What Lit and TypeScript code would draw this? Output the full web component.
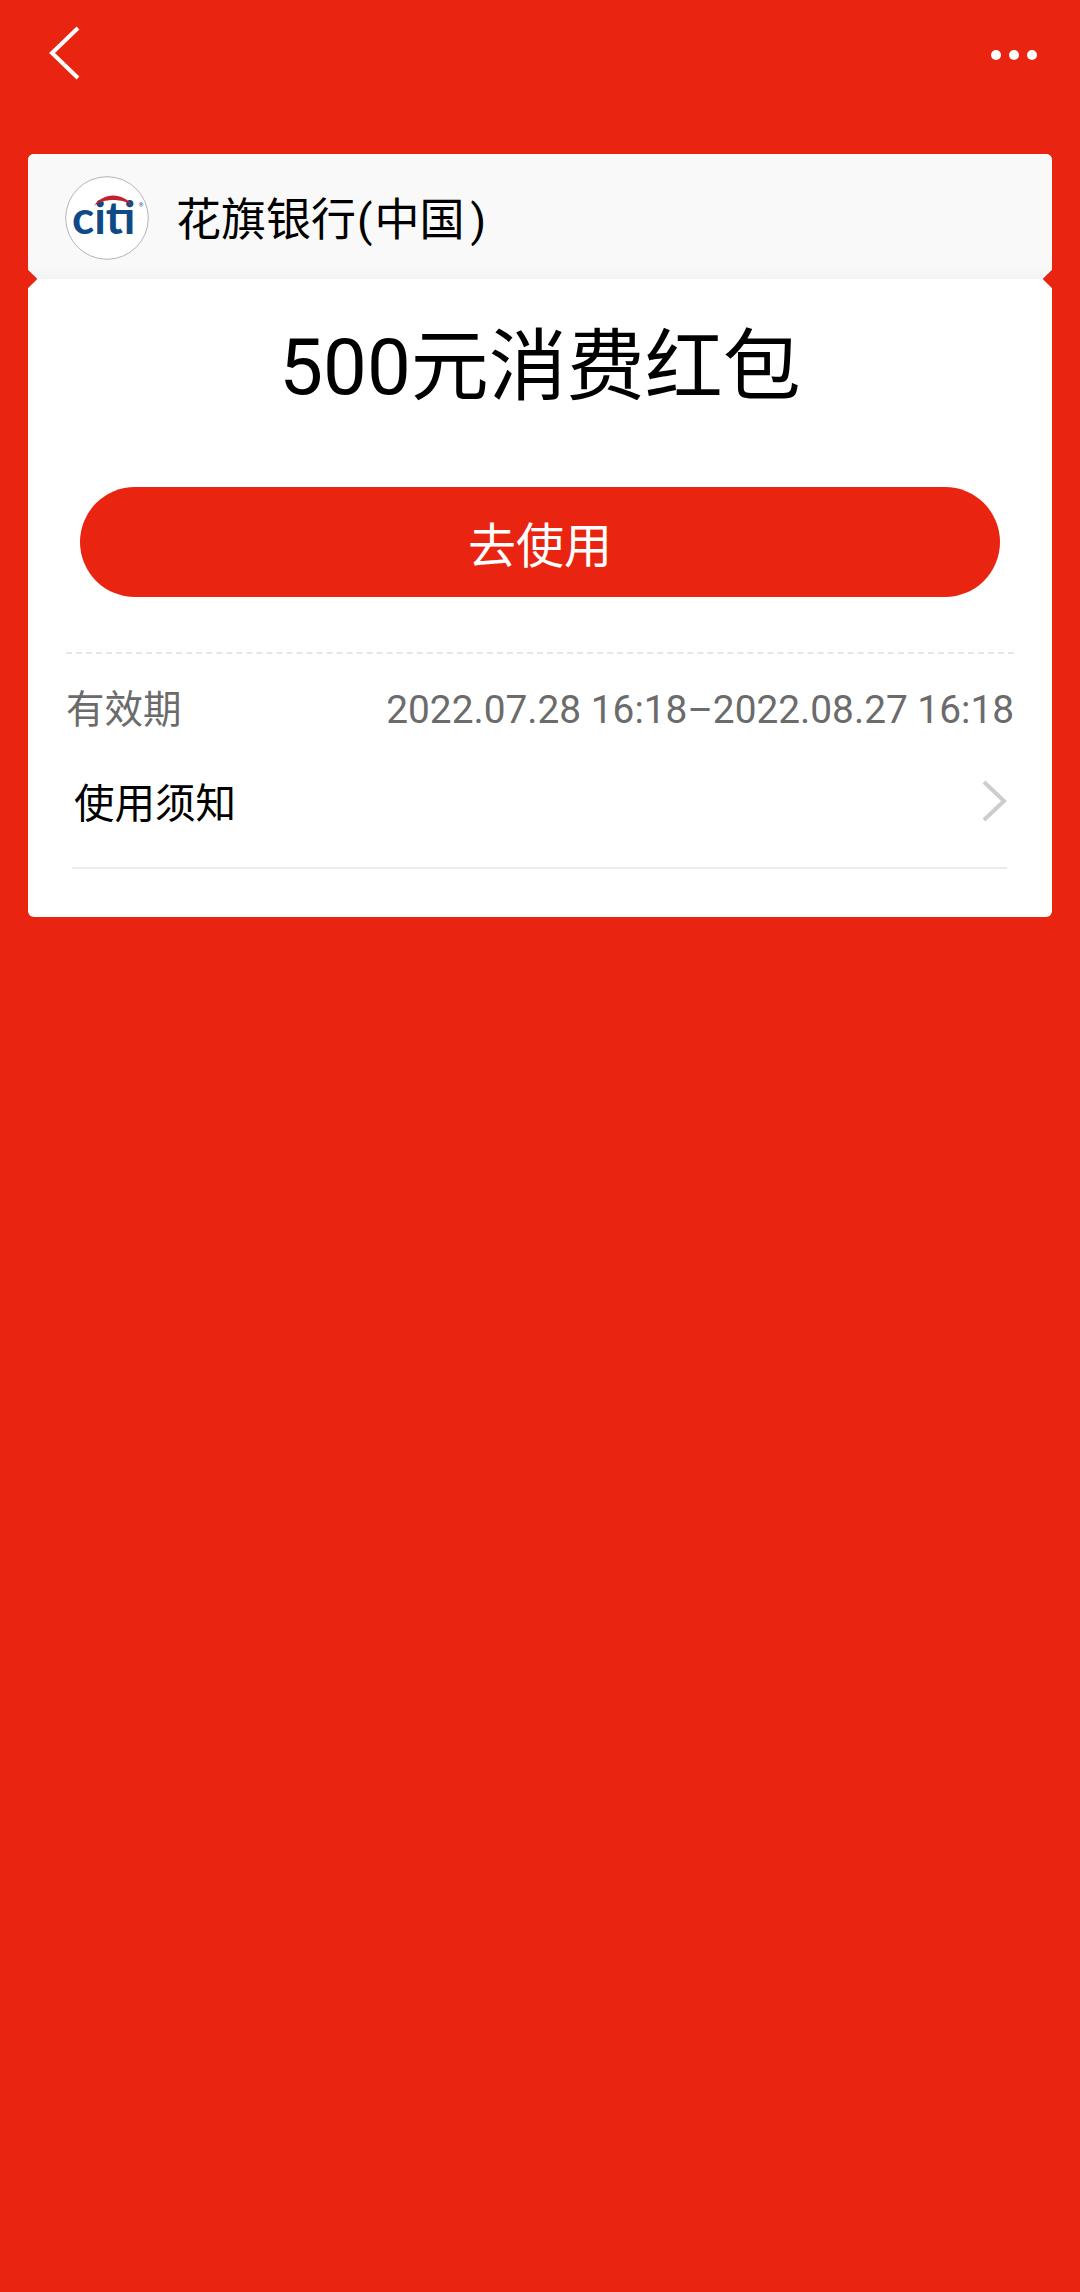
import { LitElement, html, css } from "lit";
import { customElement } from "lit/decorators.js";

@customElement("app-root")
export class AppRoot extends LitElement {
  static styles = css`
    :host {
      display: block;
      width: 1080px;
      height: 2292px;
      background: #e92511;
      font-family: Roboto, "Noto Sans CJK SC", sans-serif;
      overflow: hidden;
    }
    .nav {
      height: 154px;
      box-sizing: border-box;
      padding: 26px 43px 0 48px;
      display: flex;
      justify-content: space-between;
      align-items: flex-start;
    }
    .back { display: block; }
    .dots { display: flex; gap: 8px; margin-top: 24px; }
    .dots i { width: 10px; height: 10px; border-radius: 50%; background: #fff; display: block; }
    .card {
      position: relative;
      margin: 0 28px;
      height: 763px;
      background: #fff;
      border-radius: 6px;
      overflow: hidden;
    }
    .head {
      height: 125px;
      background: linear-gradient(#f9f9f9 0, #f9f9f9 112px, #f3f3f3 125px);
      display: flex;
      align-items: center;
      padding-left: 37px;
      gap: 27px;
      font-size: 45px;
      color: #000;
    }
    .logo { display: block; flex: none; margin-top: 2px; }
    .paren { display: inline-block; }
    .paren.open { margin: 0 2px 0 1px; }
    .paren.close { margin: 0 0 0 6px; }
    .notch {
      position: absolute;
      top: 117px;
      width: 16px;
      height: 16px;
      background: #e92511;
      transform: rotate(45deg);
    }
    .notch.l { left: -10px; }
    .notch.r { right: -10px; }
    .title {
      text-align: center;
      font-size: 78px;
      line-height: 88px;
      color: #000;
      margin-top: 45px;
    }
    .btn {
      margin: 75px 52px 0 52px;
      height: 110px;
      border-radius: 55px;
      background: #e92511;
      color: #fff;
      font-size: 48px;
      display: flex;
      align-items: center;
      justify-content: center;
    }
    .dash {
      margin: 55px 38px 0 38px;
      border-top: 2px dashed #e6e6e6;
    }
    .valid {
      margin: 29px 38px 0 38px;
      display: flex;
      justify-content: space-between;
      align-items: baseline;
      color: #6b6b6b;
      height: 54px;
      line-height: 54px;
    }
    .valid .k { font-size: 38.5px; }
    .valid .v { font-size: 38.8px; }
    .notice {
      margin: 0 45px 0 44px;
      height: 132px;
      box-sizing: border-box;
      border-bottom: 2px solid #ebebeb;
      display: flex;
      justify-content: space-between;
      align-items: center;
      padding: 0 0 3px 2px;
      color: #000;
      font-size: 40.5px;
    }
    .chev { display: block; }
  `;

  render() {
    return html`
      <div class="nav">
        <svg class="back" width="32" height="54" viewBox="0 0 32 54" aria-hidden="true">
          <path d="M30 2 L4 27 L30 52" fill="none" stroke="#fff" stroke-width="4" />
        </svg>
        <div class="dots"><i></i><i></i><i></i></div>
      </div>
      <div class="card">
        <div class="head">
          <svg class="logo" width="84" height="84" viewBox="0 0 84 84" aria-hidden="true">
            <circle cx="42" cy="42" r="41.3" fill="#fff" stroke="#b5b5b5" stroke-width="1" />
            <text x="7" y="58" font-family="Lato, sans-serif" font-weight="700" font-size="46" fill="#0f4a86">citi</text>
            <path d="M29 30 C38 16 58 16 68 30 C58 22 38 22 29 30 Z" fill="#c4202e" />
            <text x="76" y="31" text-anchor="middle" font-family="Roboto, sans-serif" font-size="6" fill="#0f4a86">®</text>
          </svg>
          <span>花旗银行<span class="paren open">(</span>中国<span class="paren close">)</span></span>
        </div>
        <div class="notch l"></div>
        <div class="notch r"></div>
        <div class="title">500元消费红包</div>
        <div class="btn">去使用</div>
        <div class="dash"></div>
        <div class="valid">
          <span class="k">有效期</span>
          <span class="v">2022.07.28 16:18–2022.08.27 16:18</span>
        </div>
        <div class="notice">
          <span>使用须知</span>
          <svg class="chev" width="26" height="42" viewBox="0 0 26 42" aria-hidden="true">
            <path d="M3 2 L23 21 L3 40" fill="none" stroke="#cdcdcd" stroke-width="4" />
          </svg>
        </div>
      </div>
    `;
  }
}
